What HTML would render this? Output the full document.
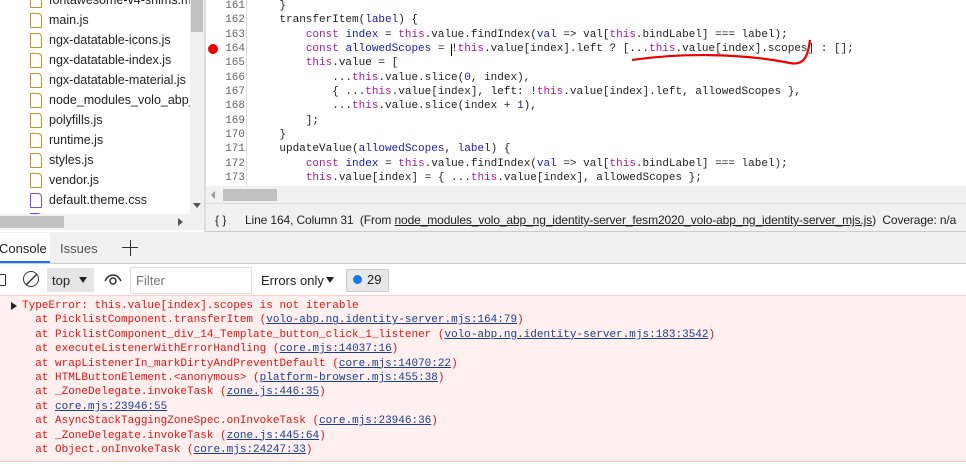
<!DOCTYPE html>
<html><head><style>
body{margin:0;width:966px;height:476px;overflow:hidden;background:#fff;font-family:"Liberation Sans",sans-serif;position:relative}
.abs{position:absolute}
.mono{font-family:"Liberation Mono",monospace;font-size:11px;white-space:pre}
.tree div{position:absolute;left:30px;font-size:12.5px;color:#222;height:20px;line-height:20px;white-space:nowrap}
.tree div:before{content:"";position:absolute;left:0;top:3px;width:10px;height:13px;border:1.3px solid #b8952a;border-radius:1px 4px 1px 1px}
.tree div span{margin-left:19px}
.tree div.css:before{border-color:#7a4ad8}
.ln{color:#666;text-align:right;width:26px}
.k{color:#a71d9a}.n{color:#1a1aa6}.t{color:#222}
.err{color:#e01616}
.err a{color:#1a3e8c;text-decoration:underline}
</style></head><body>
<div class="abs tree" style="left:0;top:0;width:190px;height:215px;overflow:hidden">
<div style="top:-10px"><span>fontawesome-v4-shims.min.js</span></div>
<div style="top:10px"><span>main.js</span></div>
<div style="top:30px"><span>ngx-datatable-icons.js</span></div>
<div style="top:50px"><span>ngx-datatable-index.js</span></div>
<div style="top:70px"><span>ngx-datatable-material.js</span></div>
<div style="top:90px"><span>node_modules_volo_abp_ng</span></div>
<div style="top:110px"><span>polyfills.js</span></div>
<div style="top:130px"><span>runtime.js</span></div>
<div style="top:150px"><span>styles.js</span></div>
<div style="top:170px"><span>vendor.js</span></div>
<div class="css" style="top:190px"><span>default.theme.css</span></div>
<div class="css" style="top:210px"><span>x</span></div>
</div>
<div class="abs" style="left:0;top:214px;width:190px;height:16px;background:#f1f1f1"></div>
<div class="abs" style="left:0;top:216px;width:64px;height:12px;background:#c1c1c1"></div>
<div class="abs" style="left:178px;top:218px;width:0;height:0;border-left:5px solid #555;border-top:4px solid transparent;border-bottom:4px solid transparent"></div>
<div class="abs" style="left:190px;top:0;width:14px;height:230px;background:#f1f1f1"></div>
<div class="abs" style="left:191px;top:0;width:12px;height:32px;background:#c1c1c1"></div>
<div class="abs" style="left:193px;top:203px;width:0;height:0;border-top:5px solid #555;border-left:4px solid transparent;border-right:4px solid transparent"></div>
<div class="abs" style="left:204px;top:0;width:2px;height:232px;background:#ddd"></div>
<div class="abs" style="left:246px;top:0;width:1px;height:186px;background:#ddd"></div>
<div class="abs" style="left:208px;top:44px;width:10px;height:10px;border-radius:50%;background:#e00"></div>
<div class="abs mono ln" style="left:219px;top:-1px;line-height:14.33px">161
162
163
164
165
166
167
168
169
170
171
172
173</div>
<div class="abs mono t" style="left:253px;top:-1px;line-height:14.33px">    }
    transferItem(<span class="n">label</span>) {
        <span class="k">const</span> <span class="n">index</span> = <span class="k">this</span>.value.findIndex(<span class="n">val</span> => val[<span class="k">this</span>.bindLabel] === label);
        <span class="k">const</span> <span class="n">allowedScopes</span> = !<span class="k">this</span>.value[index].left ? [...<span class="k">this</span>.value[index].scopes] : [];
        <span class="k">this</span>.value = [
            ...<span class="k">this</span>.value.slice(<span class="n">0</span>, index),
            { ...<span class="k">this</span>.value[index], left: !<span class="k">this</span>.value[index].left, allowedScopes },
            ...<span class="k">this</span>.value.slice(index + <span class="n">1</span>),
        ];
    }
    updateValue(<span class="n">allowedScopes</span>, <span class="n">label</span>) {
        <span class="k">const</span> <span class="n">index</span> = <span class="k">this</span>.value.findIndex(<span class="n">val</span> => val[<span class="k">this</span>.bindLabel] === label);
        <span class="k">this</span>.value[index] = { ...<span class="k">this</span>.value[index], allowedScopes };</div>
<div class="abs" style="left:451px;top:44px;width:1px;height:12px;background:#000"></div>
<svg class="abs" style="left:620px;top:35px" width="200" height="35"><path d="M12 25 C60 18 120 18 170 28 C185 31 188 20 190 5" fill="none" stroke="#e00" stroke-width="2.2"/></svg>
<div class="abs" style="left:206px;top:186px;width:760px;height:17px;background:#f1f1f1;border-bottom:1px solid #ddd"></div>
<div class="abs" style="left:223px;top:189px;width:54px;height:12px;background:#c1c1c1"></div>
<div class="abs" style="left:211px;top:191px;border-right:4px solid #999;border-top:4px solid transparent;border-bottom:4px solid transparent"></div>
<div class="abs" style="left:206px;top:204px;width:760px;height:27px;background:#f1f1f1;border-bottom:1px solid #ccc"></div>
<div class="abs" style="left:215px;top:213px;font-size:12px;color:#222;white-space:pre">{ }</div>
<div class="abs" style="left:245px;top:213px;font-size:12px;letter-spacing:-0.12px;color:#222;white-space:pre">Line 164, Column 31  (From <u>node_modules_volo_abp_ng_identity-server_fesm2020_volo-abp_ng_identity-server_mjs.js</u>)  Coverage: n/a</div>
<div class="abs" style="left:0;top:232px;width:966px;height:31px;background:#f1f1f1;border-bottom:1px solid #ccc"></div>
<div class="abs" style="left:0;top:233px;width:50px;height:30px;background:#fff;border-bottom:2px solid #1a73e8;box-sizing:border-box"></div>
<div class="abs" style="left:-1px;top:241px;font-size:13px;color:#222">Console</div>
<div class="abs" style="left:60px;top:241px;font-size:13px;color:#555">Issues</div>
<div class="abs" style="left:122px;top:247px;width:16px;height:1px;background:#333"></div>
<div class="abs" style="left:130px;top:240px;width:1px;height:16px;background:#333"></div>
<div class="abs" style="left:-6px;top:274px;width:10px;height:10px;border:1.3px solid #333;border-radius:1px"></div>
<div class="abs" style="left:23px;top:271px;width:14px;height:14px;border:1.5px solid #333;border-radius:50%"></div>
<svg class="abs" style="left:23px;top:271px" width="17" height="17"><line x1="3" y1="14" x2="14" y2="3" stroke="#333" stroke-width="1.5"/></svg>
<div class="abs" style="left:47px;top:268px;width:47px;height:24px;background:#e5e5e5"></div>
<div class="abs" style="left:52px;top:273px;font-size:13px;color:#222">top</div>
<div class="abs" style="left:79px;top:277px;border-top:6px solid #222;border-left:4.5px solid transparent;border-right:4.5px solid transparent"></div>
<svg class="abs" style="left:103px;top:271px" width="20" height="16"><path d="M2 10 C6 2 14 2 18 10" fill="none" stroke="#333" stroke-width="1.5"/><circle cx="10" cy="10" r="3" fill="none" stroke="#333" stroke-width="1.5"/></svg>
<div class="abs" style="left:130px;top:267px;width:120px;height:25px;border:1px solid #ddd;border-radius:2px;background:#fff"></div>
<div class="abs" style="left:136px;top:273px;font-size:13px;color:#777">Filter</div>
<div class="abs" style="left:261px;top:273px;font-size:13px;color:#222">Errors only</div>
<div class="abs" style="left:326px;top:277px;border-top:6px solid #222;border-left:4.5px solid transparent;border-right:4.5px solid transparent"></div>
<div class="abs" style="left:346px;top:269px;width:41px;height:21px;background:#e8e8e8;border:1px solid #ccc;border-radius:2px"></div>
<div class="abs" style="left:353px;top:275px;width:9px;height:9px;border-radius:50%;background:#1a73e8"></div>
<div class="abs" style="left:367px;top:272px;font-size:13px;color:#222">29</div>
<div class="abs" style="left:0;top:295px;width:966px;height:165px;background:#fff0f0;border-top:1px solid #fcc;border-bottom:1px solid #fcc"></div>
<div class="abs" style="left:11px;top:302px;border-left:6px solid #222;border-top:4px solid transparent;border-bottom:4px solid transparent"></div>
<div class="abs mono err" style="left:22px;top:299px;line-height:14.4px">TypeError: this.value[index].scopes is not iterable
  at PicklistComponent.transferItem (<a>volo-abp.ng.identity-server.mjs:164:79</a>)
  at PicklistComponent_div_14_Template_button_click_1_listener (<a>volo-abp.ng.identity-server.mjs:183:3542</a>)
  at executeListenerWithErrorHandling (<a>core.mjs:14037:16</a>)
  at wrapListenerIn_markDirtyAndPreventDefault (<a>core.mjs:14070:22</a>)
  at HTMLButtonElement.&lt;anonymous&gt; (<a>platform-browser.mjs:455:38</a>)
  at _ZoneDelegate.invokeTask (<a>zone.js:446:35</a>)
  at <a>core.mjs:23946:55</a>
  at AsyncStackTaggingZoneSpec.onInvokeTask (<a>core.mjs:23946:36</a>)
  at _ZoneDelegate.invokeTask (<a>zone.js:445:64</a>)
  at Object.onInvokeTask (<a>core.mjs:24247:33</a>)</div>
</body></html>
